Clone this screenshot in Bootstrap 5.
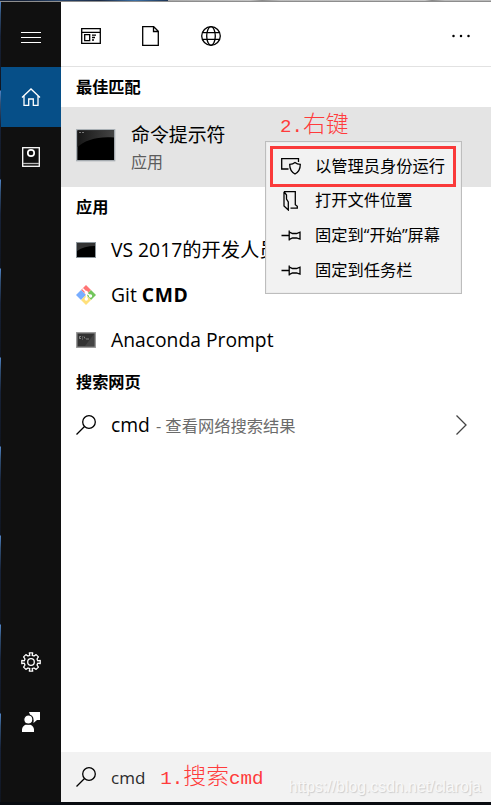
<!DOCTYPE html>
<html lang="zh-CN">
<head>
<meta charset="utf-8">
<meta name="viewport" content="width=device-width, initial-scale=1">
<title>cmd</title>
<link href="https://cdn.jsdelivr.net/npm/bootstrap@5.3.0/dist/css/bootstrap.min.css" rel="stylesheet">
<style>
html, body { height: 100%; }
body { font-family: "Open Sans", "Noto Sans CJK SC", sans-serif; color: #000; background: #080b10; line-height: 1; }
svg { display: block; flex: none; fill: none; stroke: #000; stroke-width: 1.3; }
.desk-top { height: 2px; background: linear-gradient(90deg, #16233b 0 25px, #28466d 60px, #1b2a44 100px, #3a6fa5 135px, #1d3556 168px, #aaa 168px, #c3c3c3 250px, #8b8b8b 262px, #bbb 280px, #c6c6c6 425px, #888 432px, #bbb 445px); border-bottom: 1px solid #8d8d8d; }
.shell { height: 800px; }
.desk-left { width: 1px; background: repeating-linear-gradient(#4f83c5 0, #315075 12px, #172238 34px, #10151f 88px, #4f83c5 89px); }
.rail { width: 60px; background: #101010; padding-bottom: 50px; }
.rail svg { stroke: #fff; }
.rail-btn { height: 60px; }
.rail-menu { height: 65px; padding-top: 6px; }
.rail-on { background: #064f88; }
.filters { height: 65px; border-bottom: 1px solid #e2e2e2; padding: 4px 20px 0 20px; }
.filters-set { gap: 40px; }
.group-title { height: 40px; padding-left: 15px; font-size: 16.2px; font-weight: 700; }
.best { height: 80px; background: #e4e4e4; padding-left: 15px; }
.best svg { margin-top: -5px; }
.best-name { font-size: 18.9px; line-height: 24px; }
.best-kind { font-size: 16px; line-height: 22px; color: #5c5c5c; margin-top: 4px; }
.best-text { padding-left: 15px; padding-top: 2px; }
.hit { height: 45px; padding-left: 15px; font-size: 19.3px; white-space: nowrap; }
.hit-text { margin-left: 15px; padding-top: 1px; }
.hit b { letter-spacing: .6px; }
.hint { font-size: 16.3px; color: #6b6b6b; margin-left: 1px; }
.web-term { font-weight: 500; }
.query { height: 50px; background: #f2f2f2; padding-left: 15px; font-size: 17px; color: #2b2b2b; }
.query .hit-text { padding-top: 0; }
.note { color: #ff3b3b; font-family: "Liberation Mono", "Noto Sans CJK SC", monospace; font-size: 19.2px; white-space: nowrap; }
.note-cjk { font-family: "Noto Sans CJK SC", sans-serif; font-weight: 300; font-size: 22.8px; }
.note-right { left: 219px; top: 110px; }
.ctx { left: 204px; top: 139px; width: 197px; height: 153px; background: #f2f2f2; border: 1px solid #bdbdbd; padding: 4px 4px; box-shadow: inset 0 0 0 1px #ececec; }
.ctx-item { height: 35px; padding-left: 11px; font-size: 16.25px; white-space: nowrap; }
.ctx-item span { margin-left: 14px; }
.ctx-hot { height: 41px; width: 186px; border: 3px solid #fa3a3a; padding-left: 8px; padding-bottom: 1px; margin-bottom: -4px; }
.wm { right: 10px; bottom: 7px; font-family: "Liberation Sans", sans-serif; font-size: 15.8px; color: #f8f8f8; text-shadow: 1px 1px 1px #ccc; }
</style>
<script src="https://cdn.jsdelivr.net/npm/bootstrap@5.3.0/dist/js/bootstrap.bundle.min.js"></script>
</head>
<body class="overflow-hidden">
<div class="desk-top"></div>
<div class="shell d-flex">
  <div class="desk-left"></div>
  <nav class="rail d-flex flex-column">
    <div class="rail-btn rail-menu d-flex align-items-center justify-content-center">
      <svg width="20" height="12" viewBox="0 0 20 12"><path d="M0 .5h20M0 5.5h20M0 10.5h20" stroke-width="1"/></svg>
    </div>
    <div class="rail-btn rail-on d-flex align-items-center justify-content-center">
      <svg width="20" height="20" viewBox="0 0 20 20" stroke-width="1.5"><path d="M1 10.500 10 2l9 8.500M3 9v9.300h4.700v-6.300h4.600v6.300H17V9"/></svg>
    </div>
    <div class="rail-btn d-flex align-items-center justify-content-center">
      <svg width="20" height="22" viewBox="0 0 20 22"><rect x="1.700" y="1.700" width="16.600" height="18.600"/><circle cx="10" cy="7" r="3.200" stroke-width="1.700"/><path d="M2 17.500h16" stroke="#bbb"/></svg>
    </div>
    <div class="rail-btn mt-auto d-flex align-items-center justify-content-center">
      <svg width="20" height="20" viewBox="0 0 20 20"><circle cx="10" cy="10" r="3.300"/><path stroke-linejoin="round" d="M8.300.8 8.800 3.300 7 4 4.900 2.600 2.600 4.900 4 7 3.300 8.800.8 8.300v3.400l2.500-.5L4 13l-1.400 2.100 2.300 2.300L7 16l1.800.7-.5 2.500h3.400l-.5-2.500L13 16l2.100 1.400 2.300-2.300L16 13l.7-1.800 2.500.5V8.300l-2.500.5L16 7l1.400-2.100-2.300-2.300L13 4l-1.800-.7.500-2.500Z"/></svg>
    </div>
    <div class="rail-btn d-flex align-items-center justify-content-center">
      <svg width="20" height="20" viewBox="0 0 20 20"><g fill="#fff" stroke="none"><path d="M8 0h11v8h-3l-3.500 3V8H11Z"/><path d="M1 20v-2c0-3.500 2.500-5.500 6-5.500s6 2 6 5.500v2Z"/></g><circle cx="7.300" cy="7.500" r="4.600" fill="#fff" stroke="#101010"/></svg>
    </div>
  </nav>
  <main class="position-relative flex-grow-1 bg-white d-flex flex-column">
    <div class="filters d-flex align-items-center justify-content-between">
      <div class="filters-set d-flex align-items-center">
        <svg width="20" height="18" viewBox="0 0 20 18"><path d="M.7 1.700h18.600v14.600H.7ZM.7 5.300h18.600M3.700 7.700h5v6h-5ZM11 8.200h4M11 10.500h3M11 13h2"/></svg>
        <svg width="20" height="20" viewBox="0 0 20 20"><path d="M1.700.7h11l4.600 4.600v14H1.700ZM12.500 1v4.500H17"/></svg>
        <svg width="20" height="20" viewBox="0 0 20 20"><circle cx="10" cy="10" r="9.300"/><ellipse cx="10" cy="10" rx="4.300" ry="9.300"/><path d="M1.500 6.700h17M1.500 13.300h17"/></svg>
      </div>
      <svg width="20" height="4" viewBox="0 0 20 4"><g fill="#000" stroke="none"><circle cx="2.500" cy="2" r="1.250"/><circle cx="10" cy="2" r="1.250"/><circle cx="17.500" cy="2" r="1.250"/></g></svg>
    </div>
    <div class="group-title d-flex align-items-center">最佳匹配</div>
    <div class="best d-flex align-items-center">
      <svg width="40" height="34" viewBox="0 0 40 34"><defs><linearGradient id="sheen" x2="1"><stop stop-color="#171717"/><stop offset="1" stop-color="#444"/></linearGradient></defs><rect x=".7" y="1.700" width="38" height="31" fill="#000" stroke="#a9b0b5"/><path d="M1.500 2.500h36.500v7C22 8 9 12 1.500 19Z" fill="url(#sheen)" stroke="none"/><path d="M3 4.500h2M6 4.500h2" stroke="#777" stroke-width="1"/></svg>
      <div class="best-text"><div class="best-name">命令提示符</div><div class="best-kind">应用</div></div>
    </div>
    <div class="group-title d-flex align-items-center">应用</div>
    <div class="hit d-flex align-items-center">
      <svg width="20" height="18" viewBox="0 0 20 18"><rect x=".5" y="1.500" width="19" height="15" fill="#000" stroke="#8d969c" stroke-width="1"/><path d="M1 2h18v3Q8 5 1 10Z" fill="#333" stroke="none"/></svg>
      <span class="hit-text">VS 2017的开发人员</span>
    </div>
    <div class="hit d-flex align-items-center">
      <svg width="20" height="20" viewBox="0 0 20 20"><g stroke="none"><path d="m10 0 5 5-5 5-5-5Z" fill="#ff7474"/><path d="m5 5 5 5-5 5-5-5Z" fill="#78adff"/><path d="m15 5 5 5-5 5-5-5Z" fill="#72c65c"/><path d="m10 10 5 5-5 5-5-5Z" fill="#ffe07a"/></g><g stroke="#fff" stroke-width="1.500"><path d="m6.500 3.500 4 4V14M10.500 8l4 3"/></g><g fill="#fff" stroke="none"><circle cx="10.300" cy="7.500" r="1.700"/><circle cx="10.300" cy="14" r="1.700"/><circle cx="14.500" cy="11" r="1.700"/></g></svg>
      <span class="hit-text">Git <b>CMD</b></span>
    </div>
    <div class="hit d-flex align-items-center">
      <svg width="20" height="18" viewBox="0 0 20 18"><rect x=".7" y="1.700" width="18.600" height="14.600" fill="#444" stroke="#999"/><path d="M2 3h16L9 15H2Z" fill="#333" stroke="none"/><path d="M5 5.500H3.500v2H5M6.500 5.500v1M6.500 7.500v1M8 5.500l1 2M10 8h3" stroke="#aaa" stroke-width=".7"/></svg>
      <span class="hit-text">Anaconda Prompt</span>
    </div>
    <div class="group-title d-flex align-items-center">搜索网页</div>
    <div class="hit d-flex align-items-center">
      <svg width="20" height="20" viewBox="0 0 20 20"><circle cx="13" cy="7" r="6.300"/><path d="M8.500 11.500.5 19.500"/></svg>
      <span class="hit-text"><span class="web-term">cmd</span> <span class="hint">- 查看网络搜索结果</span></span>
      <svg class="ms-auto me-4" width="11" height="20" viewBox="0 0 11 20"><path d="m.5.5 9.500 9.500L.5 19.500" stroke="#444"/></svg>
    </div>
    <div class="query mt-auto d-flex align-items-center position-relative">
      <svg width="20" height="20" viewBox="0 0 20 20"><circle cx="13" cy="7" r="6.300"/><path d="M8.500 11.500.5 19.500"/></svg>
      <span class="hit-text">cmd</span>
      <span class="note hit-text">1.<span class="note-cjk">搜索</span>cmd</span>
      <span class="wm position-absolute">https://blog.csdn.net/claroja</span>
    </div>
    <div class="note note-right position-absolute">2.<span class="note-cjk">右键</span></div>
    <div class="ctx position-absolute">
      <div class="ctx-item ctx-hot d-flex align-items-center">
        <svg width="20" height="20" viewBox="0 0 20 20"><path d="M7.500 13H.7V2.700h16.800V6M14 6.500c1.500 1.300 3 1.800 5.300 1.800 0 5-1.300 7.700-5.300 9.700-4-2-5.300-4.700-5.300-9.700 2.300 0 3.800-.5 5.300-1.800Z"/></svg>
        <span>以管理员身份运行</span>
      </div>
      <div class="ctx-item d-flex align-items-center">
        <svg width="20" height="20" viewBox="0 0 20 20"><path d="M3 .7h11.300v13l2 1.500v2H9.500M3 .7V15l4.300 4V11L5.500 8V4L3 .7"/></svg>
        <span>打开文件位置</span>
      </div>
      <div class="ctx-item d-flex align-items-center">
        <svg width="20" height="20" viewBox="0 0 20 20"><path d="M.5 9.500H8M8.200 4.500v10M8.500 6.200l3 1.300h4l3.500-1.300v7L15.500 12h-4l-3 1.300"/></svg>
        <span>固定到“开始”屏幕</span>
      </div>
      <div class="ctx-item d-flex align-items-center">
        <svg width="20" height="20" viewBox="0 0 20 20"><path d="M.5 9.500H8M8.200 4.500v10M8.500 6.200l3 1.300h4l3.500-1.300v7L15.500 12h-4l-3 1.300"/></svg>
        <span>固定到任务栏</span>
      </div>
    </div>
  </main>
</div>
</body>
</html>
